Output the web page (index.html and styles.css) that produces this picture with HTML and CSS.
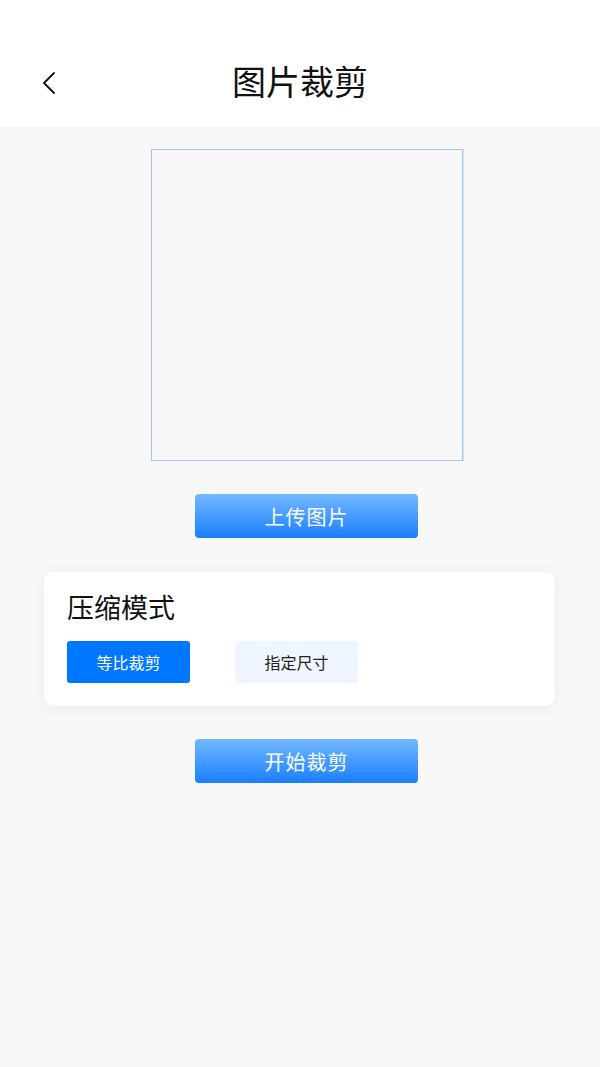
FILE: index.html
```html
<!DOCTYPE html>
<html lang="zh-CN">
<head>
  <meta charset="UTF-8">
  <meta name="viewport" content="width=device-width, initial-scale=1.0">
  <title>图片裁剪</title>
  <link rel="stylesheet" href="styles.css">
</head>
<body>
  <div class="header">
    <button class="back" aria-label="返回">
      <svg width="14" height="24" viewBox="0 0 14 24">
        <path d="M12 2 L2 12 L12 22" fill="none" stroke="#111" stroke-width="1.8" stroke-linecap="round" stroke-linejoin="round"/>
      </svg>
    </button>
    <h1 class="title">图片裁剪</h1>
  </div>

  <div class="main">
    <div class="crop-box"></div>

    <button class="btn-primary">上传图片</button>

    <div class="card">
      <h2 class="card-title">压缩模式</h2>
      <div class="modes">
        <button class="mode active">等比裁剪</button>
        <button class="mode">指定尺寸</button>
      </div>
    </div>

    <button class="btn-primary">开始裁剪</button>
  </div>
</body>
</html>
```

FILE: styles.css
```css
* {
  margin: 0;
  padding: 0;
  box-sizing: border-box;
}

body {
  min-height: 100vh;
  background-color: #f8f8f8;
  font-family: "Noto Sans CJK SC", "Noto Sans", sans-serif;
  color: #111;
}

button {
  font-family: inherit;
  border: none;
  cursor: pointer;
}

.header {
  position: relative;
  height: 127px;
  background-color: #fff;
  display: flex;
  justify-content: center;
  align-items: center;
  padding-top: 34px;
}

.back {
  position: absolute;
  left: 42px;
  top: 71px;
  background: none;
  display: flex;
}

.title {
  font-size: 34px;
  font-weight: 400;
  line-height: 40px;
}

.main {
  display: flex;
  flex-direction: column;
  align-items: center;
  padding-top: 22px;
  padding-left: 13px;
}

.crop-box {
  width: 312px;
  height: 312px;
  border: 1px solid #a6c4f2;
  box-shadow: 1px 0 0 #d3e2f8;
  background-color: #f8f8f8;
}

.btn-primary {
  width: 223px;
  height: 44px;
  margin-top: 33px;
  border-radius: 4px;
  background: linear-gradient(to bottom, #73b8ff, #1a7fff);
  color: #fff;
  font-size: 20px;
  font-weight: 400;
  letter-spacing: 1px;
}

.card {
  width: 511px;
  margin-top: 34px;
  margin-left: 31px;
  padding: 18px 23px 23px;
  background-color: #fff;
  border-radius: 9px;
  box-shadow: 0 2px 14px rgba(0, 0, 0, 0.06);
  align-self: flex-start;
}

.card-title {
  font-size: 27px;
  font-weight: 400;
  line-height: 34px;
  margin-bottom: 17px;
}

.modes {
  display: flex;
  gap: 45px;
}

.mode {
  width: 123px;
  height: 42px;
  border-radius: 3px;
  background-color: #f0f6ff;
  color: #222;
  font-size: 16px;
}

.mode.active {
  background-color: #0077ff;
  color: #fff;
}
```
